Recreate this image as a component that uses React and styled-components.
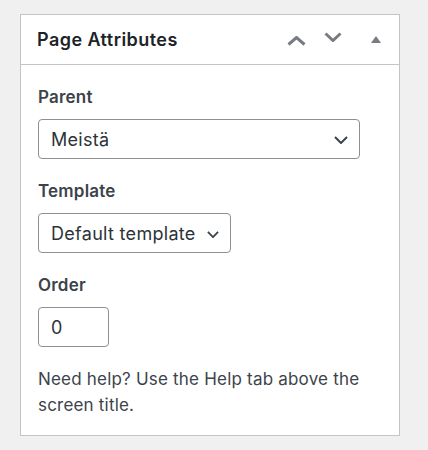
import styled, { createGlobalStyle } from "styled-components";

const GlobalStyle = createGlobalStyle`
  html, body {
    margin: 0;
    background: #f0f0f1;
  }
  body {
    font-family: Inter, "Liberation Sans", Arial, sans-serif;
    color: #3c434a;
  }
`;

const SPage = styled.div`
  padding: 14px 28px 16px 20px;
`;

const SCard = styled.div`
  width: 378px;
  background: #fff;
  border: 1px solid #c3c4c7;
`;

const SHeader = styled.div`
  height: 49px;
  display: flex;
  align-items: center;
  padding: 0 18px 0 16px;
  border-bottom: 1px solid #c3c4c7;
`;

const STitle = styled.h2`
  flex: 1;
  margin: 0;
  font-size: 18px;
  font-weight: 600;
  color: #1d2327;
  letter-spacing: 0.45px;
`;

const SHandles = styled.div`
  display: flex;
  align-items: center;
  gap: 18px;
`;

const SHandle = styled.button`
  display: flex;
  align-items: center;
  justify-content: center;
  padding: 0;
  border: 0;
  background: none;
  color: #787c82;
  cursor: pointer;
  margin-top: ${(p) => p.$offset || 0}px;
  margin-left: ${(p) => p.$space || 0}px;
`;

const SBody = styled.div`
  padding: 21px 17px 17px 17px;
`;

const SField = styled.div`
  display: flex;
  flex-direction: column;
  align-items: flex-start;
  gap: 11px;
  margin-bottom: ${(p) => (p.$last ? 0 : 21)}px;
`;

const SLabel = styled.label`
  font-size: 17px;
  line-height: 22px;
  font-weight: 600;
  color: #3c434a;
  letter-spacing: 0.2px;
`;

const SSelect = styled.div`
  box-sizing: border-box;
  width: ${(p) => p.$width}px;
  height: 40px;
  display: flex;
  align-items: center;
  justify-content: space-between;
  padding: 0 11px 0 12px;
  border: 1px solid #8c8f94;
  border-radius: 4px;
  font-size: 18px;
  letter-spacing: 0.3px;
  color: #2c3338;
  cursor: pointer;
`;

const SInput = styled.input`
  box-sizing: border-box;
  width: 71px;
  height: 40px;
  padding: 0 12px;
  border: 1px solid #8c8f94;
  border-radius: 4px;
  font-family: inherit;
  font-size: 18px;
  color: #2c3338;
  background: #fff;
  outline: none;
`;

const SHelp = styled.p`
  margin: 19px 0 0;
  font-size: 17px;
  line-height: 26px;
  letter-spacing: 0.2px;
  color: #3c434a;
  max-width: 340px;
`;

const Chevron = ({ dir = "down", w = 14, h = 8, sw = 2 }) => (
  <svg width={w} height={h} viewBox={`0 0 ${w} ${h}`} fill="none">
    <polyline
      points={
        dir === "down"
          ? `${sw / 2},${sw / 2} ${w / 2},${h - sw / 2} ${w - sw / 2},${sw / 2}`
          : `${sw / 2},${h - sw / 2} ${w / 2},${sw / 2} ${w - sw / 2},${h - sw / 2}`
      }
      stroke="currentColor"
      strokeWidth={sw}
    />
  </svg>
);

const SSelectIcon = styled.span`
  display: flex;
  color: #3c434a;
  margin-top: ${(p) => p.$offset || 0}px;
`;

const Triangle = () => (
  <svg width="10" height="7" viewBox="0 0 10 7">
    <polygon points="5,0 10,7 0,7" fill="currentColor" />
  </svg>
);

export default function App() {
  return (
    <SPage>
      <GlobalStyle />
      <SCard>
        <SHeader>
          <STitle>Page Attributes</STitle>
          <SHandles>
            <SHandle $offset={2} aria-label="Move up">
              <Chevron dir="up" w={19} h={10} sw={3} />
            </SHandle>
            <SHandle $offset={-5} aria-label="Move down">
              <Chevron dir="down" w={18} h={10} sw={3} />
            </SHandle>
            <SHandle $offset={-1} $space={11} aria-label="Toggle panel">
              <Triangle />
            </SHandle>
          </SHandles>
        </SHeader>
        <SBody>
          <SField>
            <SLabel>Parent</SLabel>
            <SSelect $width={322}>
              <span>Meistä</span>
              <SSelectIcon $offset={1}>
                <Chevron w={14} h={8} sw={2} />
              </SSelectIcon>
            </SSelect>
          </SField>
          <SField>
            <SLabel>Template</SLabel>
            <SSelect $width={193}>
              <span>Default template</span>
              <SSelectIcon $offset={2}>
                <Chevron w={12} h={7} sw={1.8} />
              </SSelectIcon>
            </SSelect>
          </SField>
          <SField $last>
            <SLabel>Order</SLabel>
            <SInput defaultValue="0" />
          </SField>
          <SHelp>Need help? Use the Help tab above the screen title.</SHelp>
        </SBody>
      </SCard>
    </SPage>
  );
}
